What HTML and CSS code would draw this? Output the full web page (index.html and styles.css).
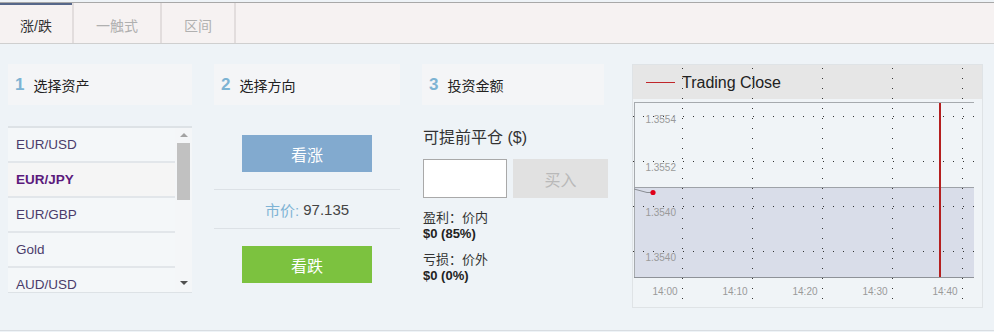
FILE: index.html
```html
<!DOCTYPE html>
<html lang="zh">
<head>
<meta charset="utf-8">
<title>Trade</title>
<link rel="stylesheet" href="styles.css">
</head>
<body>
<div class="tabs">
  <div class="tab tab-active">涨/跌</div>
  <div class="tab tab-wide">一触式</div>
  <div class="tab">区间</div>
</div>
<div class="main">
  <section class="col col-asset">
    <div class="step"><span class="num">1</span><span class="step-label">选择资产</span></div>
    <div class="asset-list">
      <ul class="assets">
        <li>EUR/USD</li>
        <li class="selected">EUR/JPY</li>
        <li>EUR/GBP</li>
        <li>Gold</li>
        <li>AUD/USD</li>
      </ul>
      <div class="scrollbar">
        <span class="arrow-box"><span class="arrow-up"></span></span>
        <span class="thumb"></span>
        <span class="spacer"></span>
        <span class="arrow-box"><span class="arrow-down"></span></span>
      </div>
    </div>
  </section>
  <section class="col col-dir">
    <div class="step"><span class="num">2</span><span class="step-label">选择方向</span></div>
    <button class="btn btn-up">看涨</button>
    <div class="price-row"><span class="price-label">市价:</span>&nbsp;<span class="price-value">97.135</span></div>
    <button class="btn btn-down">看跌</button>
  </section>
  <section class="col col-amount">
    <div class="step"><span class="num">3</span><span class="step-label">投资金额</span></div>
    <div class="close-label">可提前平仓 ($)</div>
    <div class="buy-row">
      <input class="amount-input" type="text">
      <button class="btn-buy">买入</button>
    </div>
    <div class="payout first">盈利：价内</div>
    <div class="payout strong">$0 (85%)</div>
    <div class="payout second">亏损：价外</div>
    <div class="payout strong">$0 (0%)</div>
  </section>
  <section class="chart">
    <svg class="chart-svg" width="351" height="244" viewBox="0 0 351 244">
      <rect x="0.5" y="0.5" width="350" height="243" fill="#f0f4f7" stroke="#dfe3e6"/>
      <rect x="1" y="1" width="349" height="34" fill="#e6e6e6"/>
      <line x1="14" y1="18.5" x2="43" y2="18.5" stroke="#c0262a" stroke-width="1"/>
      <text x="50" y="24" class="legend-text">Trading Close</text>
      <rect x="2" y="123" width="340" height="90" fill="#d9dde9"/>
      <line x1="2" y1="38.5" x2="342" y2="38.5" stroke="#a6aaae"/>
      <line x1="2.5" y1="38" x2="2.5" y2="214" stroke="#a6aaae"/>
      <line x1="2" y1="123.5" x2="342" y2="123.5" stroke="#9ea2a8"/>
      <line x1="2" y1="213.5" x2="342" y2="213.5" stroke="#8e9298"/>
      <g stroke="#333" stroke-width="1" stroke-dasharray="1 9">
        <line x1="1" y1="52.5" x2="342" y2="52.5"/>
        <line x1="1" y1="97.5" x2="342" y2="97.5"/>
        <line x1="1" y1="142.5" x2="342" y2="142.5"/>
        <line x1="1" y1="187.5" x2="342" y2="187.5"/>
        <line x1="50.5" y1="4" x2="50.5" y2="242"/>
        <line x1="120.5" y1="4" x2="120.5" y2="242"/>
        <line x1="190.5" y1="4" x2="190.5" y2="242"/>
        <line x1="260.5" y1="4" x2="260.5" y2="242"/>
        <line x1="330.5" y1="4" x2="330.5" y2="242"/>
      </g>
      <line x1="308" y1="39" x2="308" y2="213" stroke="#b51f1f" stroke-width="2"/>
      <g class="axis-text" text-anchor="end">
        <text x="44" y="58.5">1.3554</text>
        <text x="44" y="106.5">1.3552</text>
        <text x="44" y="151.5">1.3540</text>
        <text x="44" y="196.5">1.3540</text>
      </g>
      <g class="axis-text" text-anchor="middle">
        <text x="33" y="230.5">14:00</text>
        <text x="103" y="230.5">14:10</text>
        <text x="173" y="230.5">14:20</text>
        <text x="243" y="230.5">14:30</text>
        <text x="313" y="230.5">14:40</text>
      </g>
      <polyline points="2,125 15,128.5 20,128.5" fill="none" stroke="#8a8e94" stroke-width="1"/>
      <circle cx="21" cy="128.5" r="2.6" fill="#e0001a"/>
    </svg>
  </section>
</div>
</body>
</html>
```
FILE: styles.css
```css
* { box-sizing: border-box; }
html, body { margin: 0; padding: 0; }
body {
  background: #eef3f7;
  font-family: "Liberation Sans", "Noto Sans CJK SC", sans-serif;
  color: #333;
  padding-top: 2px;
  width: 994px;
  height: 332px;
  overflow: hidden;
}
.tabs {
  display: flex;
  height: 42px;
  background: #f6f2f2;
  border-top: 1px solid #a8a8a8;
  border-bottom: 1px solid #cfcfcf;
}
.tab {
  width: 74px;
  border-right: 2px solid #e2dddd;
  display: flex;
  align-items: center;
  justify-content: center;
  padding-top: 3px;
  font-size: 14px;
  color: #b0b0b0;
}
.tab-wide { width: 88px; }
.tab-active {
  color: #333;
  box-shadow: inset 0 2px 0 #56678a;
}
.main {
  display: flex;
  gap: 22px;
  padding: 20px 0 0 8px;
  height: 287px;
  border-bottom: 1px solid #d8dde2;
}
.col { display: flex; flex-direction: column; }
.col-asset { width: 184px; }
.col-dir { width: 186px; align-items: center; }
.col-amount { width: 186px; padding-left: 1px; }
.chart { width: 351px; height: 244px; margin-left: 2px; }
.chart-svg { display: block; }
.step {
  align-self: stretch;
  height: 41px;
  background: #f4f5f7;
  display: flex;
  align-items: center;
  padding-left: 7px;
}
.col-amount .step { margin-left: -1px; width: 182px; }
.num {
  font-weight: bold;
  font-size: 17px;
  color: #7db3d3;
  margin-right: 9px;
}
.step-label { font-size: 14px; color: #222; }
.asset-list {
  margin-top: 21px;
  height: 167px;
  border-top: 2px solid #dde2e6;
  border-bottom: 1px solid #dde2e6;
  display: flex;
  overflow: hidden;
}
.assets {
  list-style: none;
  margin: 0;
  padding: 0;
  flex: 1;
}
.assets li {
  height: 35px;
  border-bottom: 2px solid #e2e6ea;
  background: #f4f7f9;
  font-size: 13.5px;
  color: #4a3b6b;
  padding-left: 8px;
  display: flex;
  align-items: center;
}
.assets li.selected {
  font-weight: bold;
  color: #5b1a7c;
  background: #f5f5f5;
}
.scrollbar {
  width: 17px;
  background: #f4f6f8;
  display: flex;
  flex-direction: column;
  align-items: center;
  padding-bottom: 3px;
}
.arrow-box {
  height: 13px;
  display: flex;
  align-items: center;
  justify-content: center;
}
.arrow-up {
  border-left: 4px solid transparent;
  border-right: 4px solid transparent;
  border-bottom: 4px solid #a3a3a3;
}
.arrow-down {
  border-left: 4px solid transparent;
  border-right: 4px solid transparent;
  border-top: 4px solid #505050;
}
.thumb {
  margin-top: 2px;
  width: 13px;
  height: 57px;
  background: #c1c1c1;
}
.spacer { flex: 1; }
.btn {
  width: 130px;
  height: 37px;
  border: 0;
  color: #fff;
  font-family: "Liberation Sans", "Noto Sans CJK SC", sans-serif;
  font-size: 16px;
  padding: 0;
}
.btn-up { background: #82aacf; margin-top: 30px; }
.btn-down { background: #7cc23f; margin-top: 17px; }
.price-row {
  align-self: stretch;
  margin-top: 17px;
  height: 40px;
  border-top: 1px solid #dce1e6;
  border-bottom: 1px solid #dce1e6;
  display: flex;
  align-items: center;
  justify-content: center;
  font-size: 15px;
}
.price-label { color: #7fb3d5; }
.price-value { color: #444; }
.close-label {
  margin-top: 23px;
  font-size: 16px;
  line-height: 20px;
  color: #333;
}
.buy-row {
  display: flex;
  gap: 6px;
  margin-top: 11px;
}
.amount-input {
  width: 84px;
  height: 39px;
  border: 1px solid #a9a9a9;
  background: #fff;
  margin: 0;
  padding: 0;
}
.btn-buy {
  width: 95px;
  height: 39px;
  border: 0;
  background: #e1e1e1;
  color: #b9b9b9;
  font-family: "Liberation Sans", "Noto Sans CJK SC", sans-serif;
  font-size: 16px;
  padding: 0;
}
.payout {
  font-size: 13px;
  line-height: 16px;
  color: #333;
}
.payout.first { margin-top: 12px; }
.payout.second { margin-top: 10px; }
.payout.strong { font-weight: bold; color: #222; }
.legend-text {
  font-family: "Liberation Sans", sans-serif;
  font-size: 16px;
  fill: #222;
}
.axis-text {
  font-family: "Liberation Sans", sans-serif;
  font-size: 10px;
  fill: #9a9a9a;
}
```
